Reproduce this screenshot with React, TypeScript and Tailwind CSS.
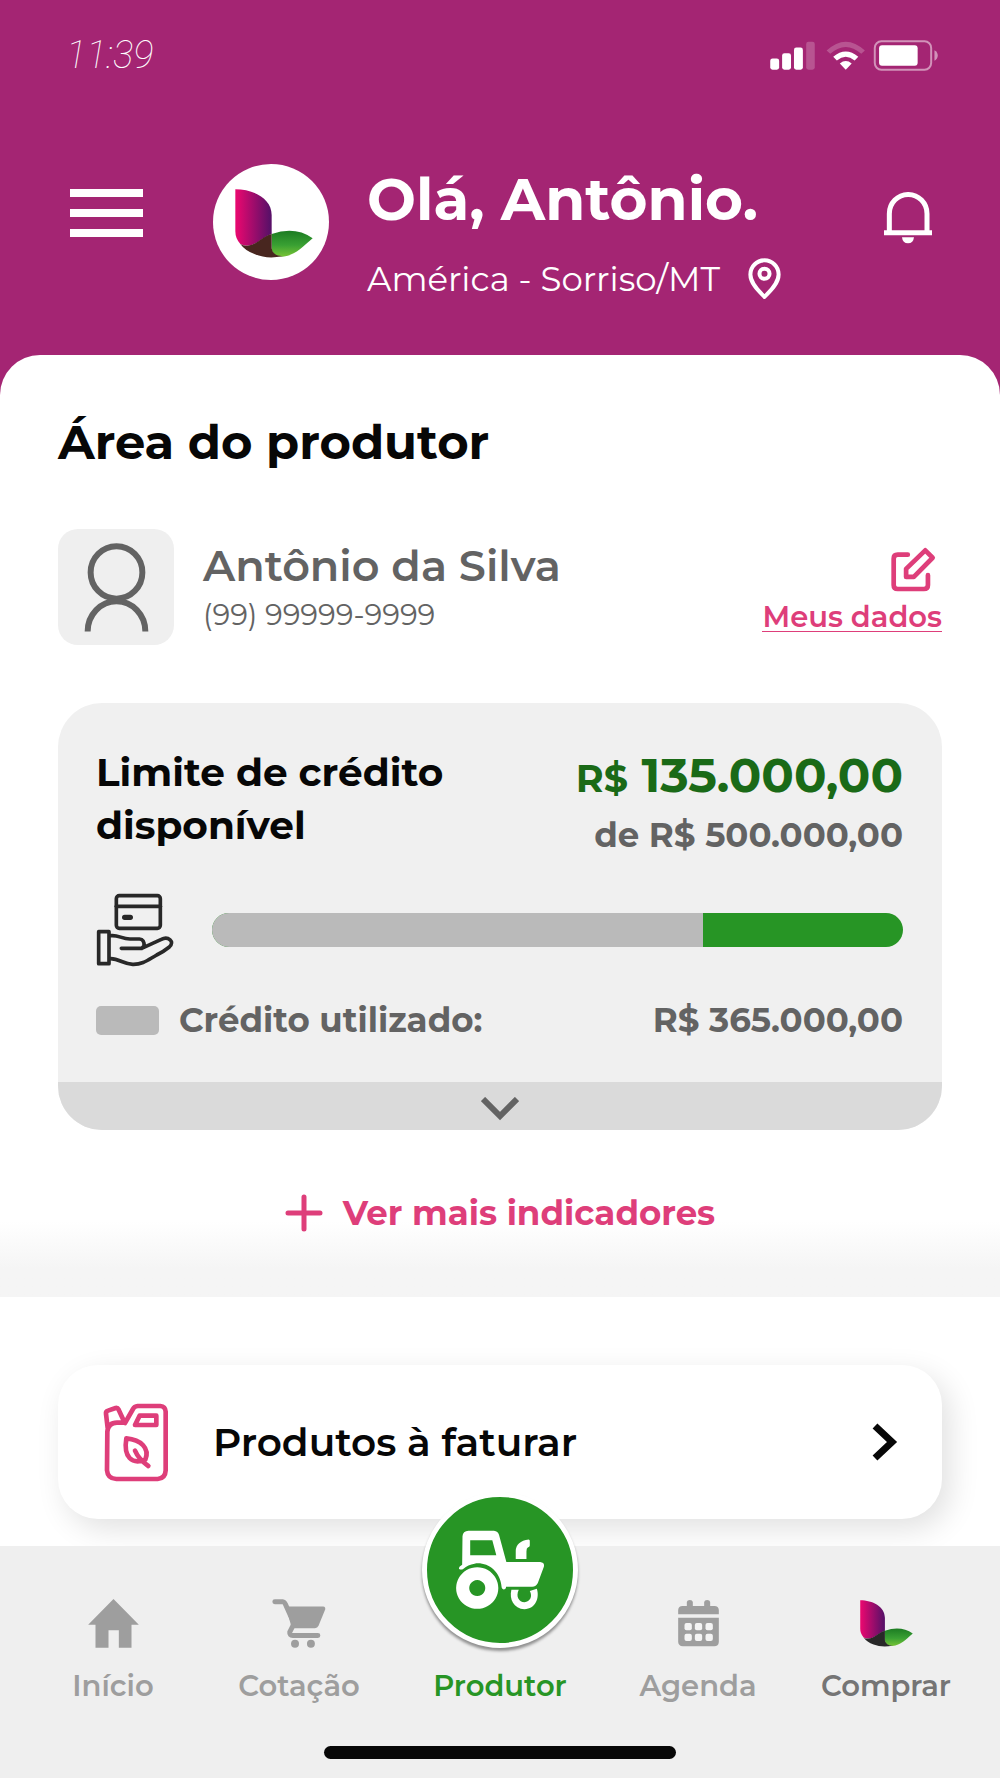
import type { ReactNode } from "react";

function Logo({ id, shade, className }: { id: string; shade: string; className: string }) {
  return (
    <svg viewBox="705 567 234 207" className={className} aria-hidden="true">
      <defs>
        <linearGradient id={id + "-pink"} x1="0" x2="1" y1="0" y2="0">
          <stop offset="0.05" stopColor="#e5086f" />
          <stop offset="0.95" stopColor="#5a1068" />
        </linearGradient>
        <linearGradient id={id + "-green"} x1="0" x2="0" y1="0" y2="1">
          <stop offset="0.05" stopColor="#1f7f24" />
          <stop offset="0.55" stopColor="#39a033" />
          <stop offset="0.95" stopColor="#70bf35" />
        </linearGradient>
      </defs>
      <path d="M706 568C760 568 815 595 815 645V702C785 712 770 737 740 737Q730 737 721 732Q706 716 706 694Z" fill={`url(#${id}-pink)`} />
      <path d="M815 702Q886 678 938 715C906 742 886 766 848 770Q815 768 815 745Z" fill={`url(#${id}-green)`} />
      <path d="M721 732Q730 738 742 737C770 736 784 710 815 702V745Q817 767 848 769Q800 778 765 763Q735 752 721 732Z" fill={shade} />
    </svg>
  );
}

function StatusIcons() {
  return (
    <svg viewBox="806 118 510 94" className="h-[31px] w-[170px]" fill="#fff" aria-hidden="true">
      <rect x="807" y="174" width="27" height="34" rx="7" />
      <rect x="843" y="158" width="27" height="50" rx="7" />
      <rect x="879" y="141" width="27" height="67" rx="7" />
      <rect x="916" y="123" width="26" height="85" rx="7" opacity=".22" />
      <path d="M978 150Q1036 96 1094 150L1083 160Q1036 118 989 160Z" opacity=".22" />
      <path d="M998 169Q1036 136 1074 169L1063 180Q1036 158 1009 180Z" />
      <path d="M1018 189Q1036 175 1054 189L1036 208Z" />
      <rect x="1124" y="122" width="171" height="86" rx="20" fill="none" stroke="#fff" strokeWidth="6" opacity=".5" />
      <rect x="1137" y="134" width="117" height="62" rx="9" />
      <path d="M1305 149Q1315 155 1315 165T1305 181Z" opacity=".5" />
    </svg>
  );
}

function BellIcon() {
  return (
    <svg viewBox="1152 575 144 156" className="h-[52px] w-12" fill="none" stroke="#fff" strokeWidth="15" aria-hidden="true">
      <path d="M1168 697V640A56 57 0 0 1 1281 640V697M1152 697H1296" />
      <path d="M1206 711H1242Q1240 729 1224 729T1206 711Z" fill="#fff" stroke="none" />
    </svg>
  );
}

function PinIcon() {
  return (
    <svg viewBox="755 771 98 125" className="h-[42px] w-[33px]" fill="none" stroke="#fff" strokeWidth="12" strokeLinejoin="round" aria-hidden="true">
      <path d="M804 887C790 872 762 848 762 820A42 42 0 0 1 846 820C846 848 818 872 804 887Z" />
      <circle cx="804" cy="818" r="15" />
    </svg>
  );
}

function PersonIcon() {
  return (
    <svg viewBox="250 455 196 267" className="h-[89px] w-[65px]" fill="none" stroke="#636363" strokeWidth="18" aria-hidden="true">
      <ellipse cx="348" cy="543" rx="78" ry="79" />
      <path d="M261 721A87 91 0 0 1 435 721" />
    </svg>
  );
}

function EditIcon() {
  return (
    <svg viewBox="1172 140 134 134" className="h-[45px] w-[45px]" fill="none" stroke="#de3e7a" strokeWidth="14" strokeLinecap="round" strokeLinejoin="round" aria-hidden="true">
      <path d="M1222 163H1192Q1180 163 1180 175V253Q1180 265 1192 265H1270Q1282 265 1282 253V224" />
      <path d="M1274 150L1296 172L1240 229H1217V205Z" />
    </svg>
  );
}

function CreditIcon() {
  return (
    <svg viewBox="138 580 234 222" className="h-[74px] w-[78px] shrink-0" fill="none" stroke="#282828" strokeWidth="11" strokeLinecap="round" strokeLinejoin="round" aria-hidden="true">
      <rect x="199" y="588" width="132" height="98" rx="9" />
      <path d="M199 620H331" />
      <path d="M224 653H241" strokeWidth="16" />
      <rect x="146" y="696" width="31" height="96" />
      <path d="M182 708C205 705 215 718 240 718H268Q284 719 282 739L275 746H214M275 746L334 719C354 708 376 726 358 742Q342 755 320 766C295 780 278 795 248 794C222 793 208 778 182 777" />
    </svg>
  );
}

function CanisterIcon() {
  return (
    <svg viewBox="160 128 198 237" className="h-[79px] w-[66px] shrink-0" fill="none" stroke="#de3e7a" strokeWidth="14" strokeLinecap="round" strokeLinejoin="round" aria-hidden="true">
      <path d="M174 203L169 160Q168 153 175 151L198 143Q204 142 207 148L225 187H202Q176 187 173 214L172 330Q174 355 200 356H324Q347 354 348 330V154Q347 138 332 137H264Q254 138 250 146L226 188" />
      <path d="M270 166H320V194H256Z" />
      <path d="M230 234C274 238 301 264 287 298C246 314 221 290 230 234ZM256 271Q267 297 296 317" />
    </svg>
  );
}

function TractorIcon() {
  return (
    <svg viewBox="82 82 436 436" className="size-[146px]" aria-hidden="true">
      <g fill="#fff">
        <path fillRule="evenodd" d="M188 199Q189 184 206 183H282Q294 184 297 195L319 276H420Q434 278 431 290L413 339Q408 350 396 350H318V352Q317 358 311 358Q306 357 305 352C302 302 260 275 224 281Q204 284 191 296Q184 301 178 297Q175 290 187 284ZM211 211V256H289L277 211Z" />
        <path d="M347 267V243Q348 214 386 209Q390 210 389 215V227Q389 232 383 233Q379 235 379 245V267Z" />
        <path fillRule="evenodd" d="M232 292A63 62 0 1 1 231.900 292ZM232 330A24 24 0 1 0 232.100 330Z" />
        <path d="M334 359H356C346 380 357 396 373 396C390 395 398 379 389 363L410 356C419 384 406 416 373 417C341 416 327 387 334 359Z" />
      </g>
    </svg>
  );
}

function HomeIcon() {
  return (
    <svg viewBox="142 117 152 147" className="h-[49px] w-[51px]" fill="#9e9e9e" aria-hidden="true">
      <path d="M218 117L294 194H272V263H234V211H203V263H164V194H142Z" />
    </svg>
  );
}

function CartIcon() {
  return (
    <svg viewBox="698 116 162 148" className="h-[49px] w-[54px]" fill="#9e9e9e" aria-hidden="true">
      <path d="M706 124H729Q735 125 738 132L764 190L751 216Q750 226 760 226H836" fill="none" stroke="#9e9e9e" strokeWidth="15" strokeLinecap="round" strokeLinejoin="round" />
      <path d="M740 139H852Q860 140 858 148L838 197Q835 204 827 204H757Z" />
      <circle cx="767" cy="251" r="12" />
      <circle cx="815" cy="251" r="12" />
    </svg>
  );
}

function CalendarIcon() {
  return (
    <svg viewBox="236 117 122 144" className="h-12 w-[41px]" fill="#9e9e9e" aria-hidden="true">
      <path d="M236 163V150Q237 138 249 138H262V126Q263 120 271 120T280 126V138H314V126Q315 120 323 120T332 126V138H345Q357 138 358 150V163Z" />
      <path d="M236 173H358V246Q357 259 344 259H250Q237 258 236 246Z" />
      <g fill="#f4f4f4">
        {[255, 286, 318].map((x) =>
          [189, 221].map((y) => <rect key={`${x}-${y}`} x={x} y={y} width="22" height="22" rx="6" />),
        )}
      </g>
    </svg>
  );
}

function NavItem({ icon, label, tone = "text-[#9e9e9e]" }: { icon: ReactNode; label: string; tone?: string }) {
  return (
    <a href="#" className={`flex flex-col items-center gap-[18px] pt-[52px] text-[29px] leading-10 font-semibold ${tone}`}>
      <span className="flex h-[50px] items-center">{icon}</span>
      {label}
    </a>
  );
}

export default function App() {
  const total = 500000;
  const used = 365000;
  return (
    <div className="flex min-h-screen flex-col bg-white font-['Montserrat',Inter,sans-serif] text-[#070707]">
      <header className="bg-[#a42573] pb-[92px] text-white">
        <div className="flex items-center justify-between pt-8 pr-[61px] pl-[66px]">
          <time className="font-[Roboto] text-[38px] leading-[46px] font-thin italic">11:39</time>
          <StatusIcons />
        </div>
        <div className="mt-[86px] flex items-start px-[68px]">
          <button type="button" aria-label="Menu" className="mt-[25px] ml-0.5 flex w-[73px] shrink-0 flex-col gap-3">
            <span className="h-2 w-full bg-white" />
            <span className="h-2 w-full bg-white" />
            <span className="h-2 w-full bg-white" />
          </button>
          <div className="ml-[70px] flex size-[116px] shrink-0 items-center justify-center rounded-full bg-white pt-0.5 pl-1.5">
            <Logo id="brand" shade="#48261f" className="h-[69px] w-[78px]" />
          </div>
          <div className="ml-[38px] flex-1">
            <h1 className="pt-1 text-[58px] leading-[64px] font-bold whitespace-nowrap">Olá, Antônio.</h1>
            <p className="mt-[23px] flex items-center gap-7 text-[34px] leading-[48px] whitespace-nowrap">
              América - Sorriso/MT
              <PinIcon />
            </p>
          </div>
          <button type="button" aria-label="Notificações" className="mt-7 shrink-0">
            <BellIcon />
          </button>
        </div>
      </header>

      <main className="-mt-10 flex-1 rounded-t-[40px] bg-white">
        <section className="bg-linear-to-b from-transparent from-92% to-[#f5f5f5] to-97% px-[58px] pt-[55px] pb-14">
          <h2 className="text-[48px] leading-[64px] font-bold">Área do produtor</h2>

          <div className="mt-[55px] flex items-center">
            <div className="flex size-[116px] items-center justify-center rounded-[20px] bg-[#efefef]">
              <PersonIcon />
            </div>
            <div className="ml-[29px] flex-1 pt-[3px] text-[#636363]">
              <p className="text-[43px] leading-[52px] font-semibold">Antônio da Silva</p>
              <p className="text-[29px] leading-[46px]">(99) 99999-9999</p>
            </div>
            <a href="#" className="mt-1 flex flex-col items-end text-[29px] leading-7 font-semibold text-[#de3e7a]">
              <span className="mr-1.5 mb-[11px]">
                <EditIcon />
              </span>
              <span className="border-b border-[#de3e7a]">Meus dados</span>
            </a>
          </div>

          <div className="mt-[58px] overflow-hidden rounded-[44px] bg-[#f0f0f0]">
            <div className="pt-[43px] pr-[39px] pb-9 pl-[38px]">
              <div className="flex justify-between">
                <h3 className="text-[39px] leading-[53px] font-bold">
                  Limite de crédito
                  <br />
                  disponível
                </h3>
                <div className="text-right">
                  <p className="text-[48px] leading-[58px] font-bold text-[#1a6a17]">
                    <span className="text-[38px]">R$</span> 135.000,00
                  </p>
                  <p className="text-[34px] leading-[54px] font-bold text-[#636363]">de R$ 500.000,00</p>
                </div>
              </div>
              <div className="mt-[31px] flex items-center gap-[38px]">
                <CreditIcon />
                <div
                  role="img"
                  aria-label="Crédito utilizado e disponível"
                  className="flex h-[34px] flex-1 overflow-hidden rounded-full bg-[#279525]"
                >
                  <div className="bg-[#bababa]" style={{ width: `${(used / total) * 97.3}%` }} />
                </div>
              </div>
              <div className="mt-[27px] flex items-center text-[34px] leading-[52px] font-bold text-[#636363]">
                <span className="mr-5 h-[29px] w-[63px] rounded-[5px] bg-[#bababa]" />
                <span className="flex-1">Crédito utilizado:</span>
                <span>R$ 365.000,00</span>
              </div>
            </div>
            <button type="button" aria-label="Expandir" className="flex h-12 w-full items-center justify-center bg-[#dadada]">
              <svg viewBox="0 0 38 24" className="mt-1.5 h-6 w-[38px]" fill="none" stroke="#636363" strokeWidth="6" aria-hidden="true">
                <path d="M2 2L19 19L36 2" />
              </svg>
            </button>
          </div>

          <div className="mt-[55px] flex justify-center">
            <button type="button" className="flex items-center gap-5 text-[34px] leading-[56px] font-bold text-[#de3e7a]">
              <svg viewBox="0 0 38 38" className="size-[38px]" stroke="#de3e7a" strokeWidth="5" strokeLinecap="round" aria-hidden="true">
                <path d="M19 3V35M3 19H35" />
              </svg>
              Ver mais indicadores
            </button>
          </div>
        </section>

        <section className="overflow-hidden px-[58px] pt-[68px] pb-[27px]">
          <a href="#" className="flex h-[154px] items-center rounded-[40px] bg-white pr-[44px] pl-[45px] shadow-[8px_10px_30px_rgba(0,0,0,0.12)]">
            <CanisterIcon />
            <span className="ml-11 flex-1 text-[39px] font-semibold">Produtos à faturar</span>
            <svg viewBox="0 0 26 38" className="h-[38px] w-[26px]" fill="none" stroke="#070707" strokeWidth="7" aria-hidden="true">
              <path d="M3 3L20 19L3 35" />
            </svg>
          </a>
        </section>
      </main>

      <footer className="bg-[#efefef]">
        <nav className="grid grid-cols-[198fr_174fr_228fr_168fr_208fr] pr-2.5 pl-3.5">
          <NavItem icon={<HomeIcon />} label="Início" />
          <NavItem icon={<CartIcon />} label="Cotação" />
          <a href="#" aria-current="page" className="relative flex flex-col items-center pt-[120px] text-[29px] leading-10 font-semibold text-[#279525]">
            <span className="absolute -top-[54px] rounded-full border-[5px] border-white bg-[#279525] shadow-[0_3px_3px_rgba(0,0,0,0.4)]">
              <TractorIcon />
            </span>
            Produtor
          </a>
          <NavItem icon={<CalendarIcon />} label="Agenda" />
          <NavItem icon={<Logo id="shop" shade="#282828" className="h-[47px] w-[53px]" />} label="Comprar" tone="text-[#757575]" />
        </nav>
        <div className="mx-auto mt-10 mb-[19px] h-[13px] w-[352px] rounded-full bg-[#070707]" />
      </footer>
    </div>
  );
}
